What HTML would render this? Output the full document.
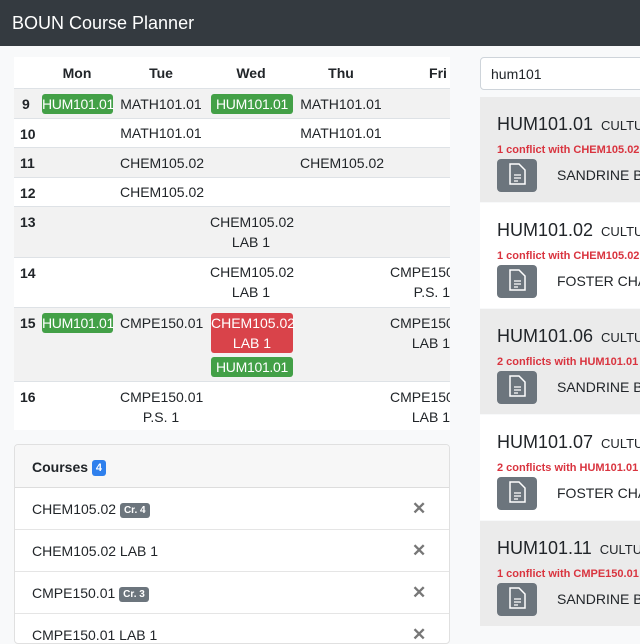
<!DOCTYPE html>
<html><head><style>
*{box-sizing:border-box;margin:0;padding:0}
body{width:640px;height:640px;overflow:hidden;background:#f8f9fa;font-family:"Liberation Sans",sans-serif;color:#212529;position:relative;font-size:14px}
.a{position:absolute}
.nav{left:0;top:0;width:640px;height:46px;background:#343a40;color:#fff;font-size:18px;padding:13px 0 0 12px}
.tbl{left:14px;top:57px;width:436px;height:373px;background:#fff;overflow:hidden}
.row{position:absolute;left:0;width:436px;border-top:1px solid #dee2e6}
.g{background:#f2f2f2}
.h{position:absolute;left:6px;font-weight:bold;top:7px}
.c{position:absolute;text-align:center;line-height:20px;white-space:nowrap}
.grn{background:#43a047;color:#fff;border-radius:3px;letter-spacing:-0.3px}
.red{background:#d9434a;color:#fff;border-radius:3px}
.card{left:14px;top:444px;width:436px;height:200px;background:#fff;border:1px solid #e0e0e0;border-radius:4px;overflow:hidden}
.ch{height:43px;background:#f7f7f7;border-bottom:1px solid #ddd;padding:14px 0 0 17px;font-weight:bold}
.badge{display:inline-block;background:#2f80ed;color:#fff;font-size:11px;border-radius:3px;padding:2px 4px;vertical-align:1px}
.it{height:42px;border-bottom:1px solid #e5e5e5;padding:13px 0 0 17px;position:relative}
.cr{display:inline-block;background:#6c757d;color:#fff;font-size:10px;font-weight:bold;border-radius:3px;padding:2px 4px;vertical-align:1px}
.x{position:absolute;left:397px;top:11px;color:#777;font-size:17px;font-weight:bold}
.srch{left:480px;top:57px;width:170px;height:33px;background:#fff;border:1px solid #ced4da;border-radius:4px;padding:8px 0 0 10px}
.res{left:480px;width:170px;height:105px;overflow:hidden;white-space:nowrap}
.rt{position:absolute;left:17px;top:17px;font-size:18px}
.rt span{font-size:13px;margin-left:8px}
.cf{position:absolute;left:17px;top:47px;color:#d9343f;font-size:11px;font-weight:bold}
.ic{position:absolute;left:17px;top:62px;width:40px;height:33px;background:#6c757d;border-radius:4px}
.nm{position:absolute;left:77px;top:70px;font-size:14px}
</style></head><body>
<div class="a nav">BOUN Course Planner</div>
<div class="a tbl">
 <div class="row" style="top:0;height:31px;border:none;font-weight:bold">
  <div class="c" style="left:43px;width:40px;top:6px">Mon</div>
  <div class="c" style="left:127px;width:40px;top:6px">Tue</div>
  <div class="c" style="left:217px;width:40px;top:6px">Wed</div>
  <div class="c" style="left:307px;width:40px;top:6px">Thu</div>
  <div class="c" style="left:404px;width:40px;top:6px">Fri</div>
 </div>
 <div class="row g" style="top:31px;height:30px"><div class="h" style="left:8px">9</div>
  <div class="c grn" style="left:28px;top:5px;width:71px">HUM101.01</div>
  <div class="c" style="left:106px;top:5px;width:82px">MATH101.01</div>
  <div class="c grn" style="left:197px;top:5px;width:82px">HUM101.01</div>
  <div class="c" style="left:286px;top:5px;width:82px">MATH101.01</div></div>
 <div class="row" style="top:61px;height:29px"><div class="h">10</div>
  <div class="c" style="left:106px;top:4px;width:82px">MATH101.01</div>
  <div class="c" style="left:286px;top:4px;width:82px">MATH101.01</div></div>
 <div class="row g" style="top:90px;height:30px"><div class="h">11</div>
  <div class="c" style="left:106px;top:5px;width:82px">CHEM105.02</div>
  <div class="c" style="left:286px;top:5px;width:82px">CHEM105.02</div></div>
 <div class="row" style="top:120px;height:29px"><div class="h">12</div>
  <div class="c" style="left:106px;top:4px;width:82px">CHEM105.02</div></div>
 <div class="row g" style="top:149px;height:51px"><div class="h">13</div>
  <div class="c" style="left:196px;top:5px;width:82px">CHEM105.02<br>LAB 1</div></div>
 <div class="row" style="top:200px;height:50px"><div class="h">14</div>
  <div class="c" style="left:196px;top:4px;width:82px">CHEM105.02<br>LAB 1</div>
  <div class="c" style="left:376px;top:4px;width:60px;text-align:right">CMPE150<br>P.S. 1</div></div>
 <div class="row g" style="top:250px;height:74px"><div class="h">15</div>
  <div class="c grn" style="left:28px;top:5px;width:71px">HUM101.01</div>
  <div class="c" style="left:106px;top:5px;width:82px">CMPE150.01</div>
  <div class="c red" style="left:197px;top:5px;width:82px">CHEM105.02<br>LAB 1</div>
  <div class="c grn" style="left:197px;top:49px;width:82px">HUM101.01</div>
  <div class="c" style="left:376px;top:5px;width:60px;text-align:right">CMPE150<br>LAB 1</div></div>
 <div class="row" style="top:324px;height:49px"><div class="h">16</div>
  <div class="c" style="left:106px;top:5px;width:82px">CMPE150.01<br>P.S. 1</div>
  <div class="c" style="left:376px;top:5px;width:60px;text-align:right">CMPE150<br>LAB 1</div></div>
</div>
<div class="a card">
 <div class="ch">Courses <span class="badge">4</span></div>
 <div class="it">CHEM105.02 <span class="cr">Cr. 4</span><span class="x">✕</span></div>
 <div class="it">CHEM105.02 LAB 1<span class="x">✕</span></div>
 <div class="it">CMPE150.01 <span class="cr">Cr. 3</span><span class="x">✕</span></div>
 <div class="it">CMPE150.01 LAB 1<span class="x">✕</span></div>
</div>
<div class="a srch">hum101</div>
<svg width="0" height="0" style="position:absolute"><defs><g id="doc"><path d="M13 8h9l6 6v14H13z" fill="none" stroke="#fff" stroke-width="1.5"/><path d="M17 19h7M17 22h7M17 25h4" stroke="#fff" stroke-width="1.3"/></g></defs></svg>
<div class="a res" style="top:97px;background:#ebebeb"><div class="rt">HUM101.01<span>CULTURE</span></div><div class="cf">1 conflict with CHEM105.02</div><div class="ic"><svg width="40" height="33"><use href="#doc" x="0" y="-3"/></svg></div><div class="nm">SANDRINE BERGES</div></div>
<div class="a res" style="top:203px;background:#fff"><div class="rt">HUM101.02<span>CULTURE</span></div><div class="cf">1 conflict with CHEM105.02</div><div class="ic"><svg width="40" height="33"><use href="#doc" x="0" y="-3"/></svg></div><div class="nm">FOSTER CHAMBERS</div></div>
<div class="a res" style="top:309px;background:#ebebeb"><div class="rt">HUM101.06<span>CULTURE</span></div><div class="cf">2 conflicts with HUM101.01</div><div class="ic"><svg width="40" height="33"><use href="#doc" x="0" y="-3"/></svg></div><div class="nm">SANDRINE BERGES</div></div>
<div class="a res" style="top:415px;background:#fff"><div class="rt">HUM101.07<span>CULTURE</span></div><div class="cf">2 conflicts with HUM101.01</div><div class="ic"><svg width="40" height="33"><use href="#doc" x="0" y="-3"/></svg></div><div class="nm">FOSTER CHAMBERS</div></div>
<div class="a res" style="top:521px;background:#ebebeb"><div class="rt">HUM101.11<span>CULTURE</span></div><div class="cf">1 conflict with CMPE150.01</div><div class="ic"><svg width="40" height="33"><use href="#doc" x="0" y="-3"/></svg></div><div class="nm">SANDRINE BERGES</div></div>
</body></html>
